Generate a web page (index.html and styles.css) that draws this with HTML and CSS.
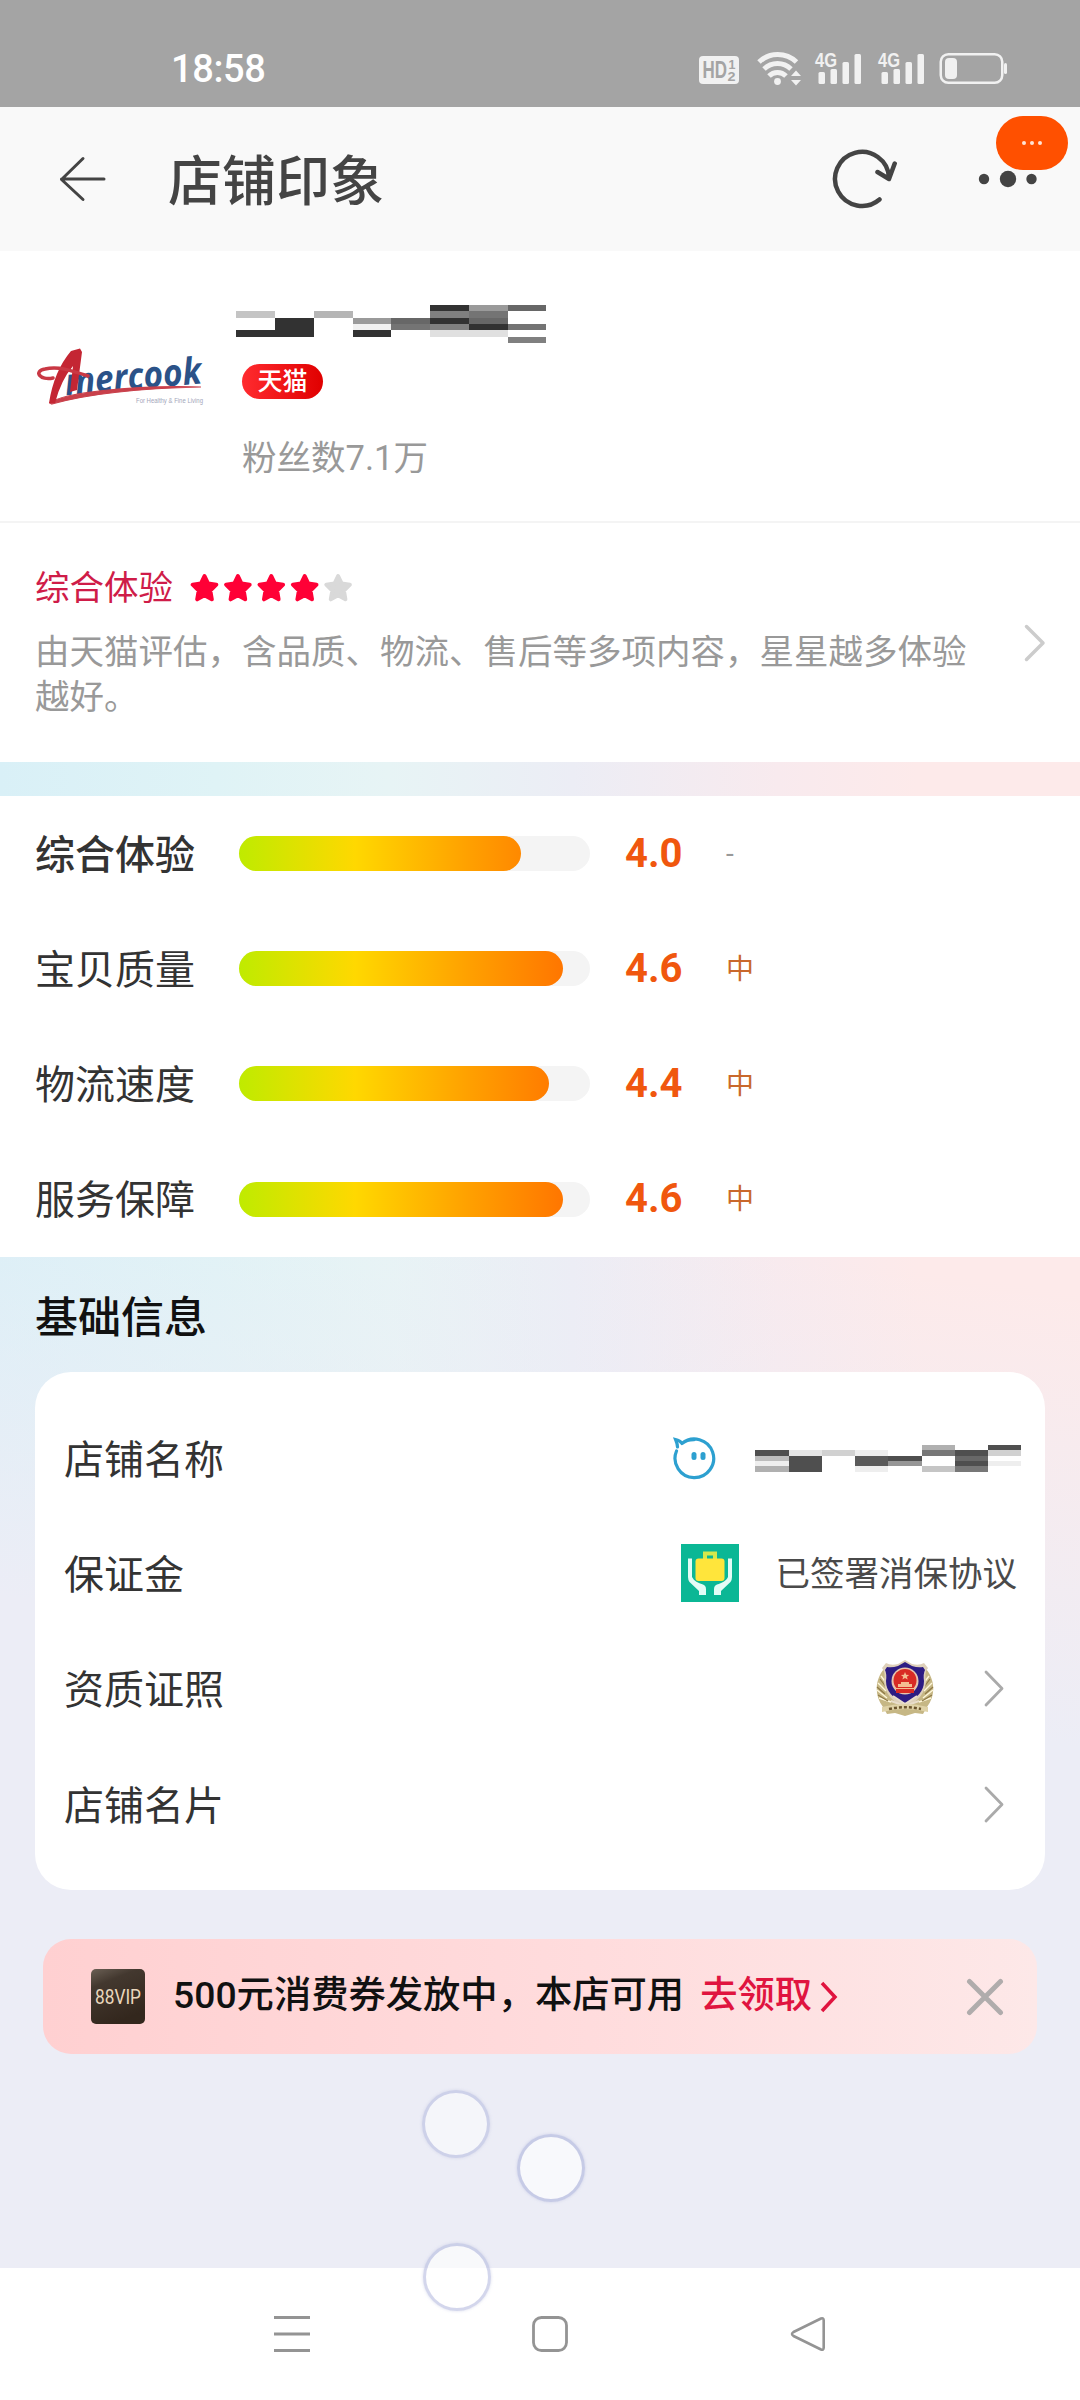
FILE: index.html
```html
<!DOCTYPE html>
<html lang="zh-CN">
<head>
<meta charset="utf-8">
<title>店铺印象</title>
<link rel="stylesheet" href="styles.css">
</head>
<body>
<div class="screen">
  <header class="status">
    <span class="time">18:58</span>
    <svg class="status-icons" width="312" height="48" viewBox="698 44 312 48">
      <g fill="#f1f1f1">
        <rect x="699" y="56" width="40" height="28" rx="4"/>
        <g fill="none" stroke="#f1f1f1" stroke-width="5">
          <path d="M759 62a27 27 0 0 1 37.500 0"/>
          <path d="M764 69a19.500 19.500 0 0 1 27 0"/>
          <path d="M769 76a12 12 0 0 1 17 0"/>
        </g>
        <circle cx="777.500" cy="81.500" r="3.400"/>
        <path d="M791 76l5-5.500 5 5.500zM791 80h10l-5 5.500z"/>
        <rect x="818.500" y="72" width="6.500" height="12" rx="1.500"/>
        <rect x="830.500" y="69" width="6.500" height="15" rx="1.500"/>
        <rect x="842.500" y="62" width="6.500" height="22" rx="1.500"/>
        <rect x="854.500" y="54" width="6.500" height="30" rx="1.500"/>
        <rect x="881.500" y="72" width="6.500" height="12" rx="1.500"/>
        <rect x="893.500" y="69" width="6.500" height="15" rx="1.500"/>
        <rect x="905.500" y="62" width="6.500" height="22" rx="1.500"/>
        <rect x="917.500" y="54" width="6.500" height="30" rx="1.500"/>
        <rect x="940.750" y="54.250" width="61.500" height="28.500" rx="7.500" fill="none" stroke="#f1f1f1" stroke-width="2.500"/>
        <rect x="945" y="58" width="12" height="21" rx="4"/>
        <rect x="1004" y="63" width="3" height="11" rx="1.500"/>
        <g class="net">
          <text x="815" y="67" textLength="22" lengthAdjust="spacingAndGlyphs">4G</text>
          <text x="878" y="67" textLength="22" lengthAdjust="spacingAndGlyphs">4G</text>
        </g>
      </g>
      <g class="hd">
        <text x="702.500" y="78" font-size="23" textLength="24.500" lengthAdjust="spacingAndGlyphs">HD</text>
        <text x="728.500" y="69" font-size="12.500">1</text>
        <text x="727.500" y="80.500" font-size="12.500" textLength="8" lengthAdjust="spacingAndGlyphs">2</text>
      </g>
    </svg>
  </header>

  <nav class="topbar">
    <svg class="back" width="48" height="46" viewBox="0 0 48 46"><path d="M45 23H2.500M24 2.500L2.500 23.500L24 43.500" fill="none" stroke="#444" stroke-width="3" stroke-linecap="round" stroke-linejoin="round"/></svg>
    <h1>店铺印象</h1>
    <svg class="refresh" width="68" height="64" viewBox="830 147 68 64"><path d="M879.500 199.500A27 27 0 1 1 889 177.500M877.500 172L889 179L894.700 163.500" fill="none" stroke="#444" stroke-width="4.500" stroke-linecap="round" stroke-linejoin="round"/></svg>
    <div class="more">
      <svg width="60" height="20" viewBox="0 0 60 20" fill="#444"><circle cx="6" cy="10" r="5.200"/><circle cx="30" cy="10" r="8.200"/><circle cx="53.500" cy="10" r="5.200"/></svg>
      <span class="bubble"><i></i><i></i><i></i></span>
    </div>
  </nav>

  <main class="content">
    <section class="shop">
      <svg class="logo" width="174" height="78" viewBox="34 337 174 78">
        <g transform="rotate(-5 68 396)"><text class="logo-word" x="66" y="395" textLength="137" lengthAdjust="spacingAndGlyphs">mercook</text></g>
        <path d="M50 403C62 393 130 385 201 387C150 388 92 393 52 404z" fill="#c9404b" stroke="#c9404b" stroke-width="1.200"/>
        <path d="M71 351L80 348.500L82 352L77 390L70 392L73 366Q61 380 55 403L49 403Q54 371 71 351z" fill="#c42633"/>
        <path d="M53 378C40 381 33 371 45 369C58 366 70 370 88 376" fill="none" stroke="#c93844" stroke-width="3.500" stroke-linecap="round"/>
        <text class="logo-tag" x="136" y="403" textLength="67" lengthAdjust="spacingAndGlyphs">For Healthy &amp; Fine Living</text>
      </svg>
      <div class="shop-info">
        <svg class="masked-name" width="310" height="38" viewBox="0 0 310 38" shape-rendering="crispEdges">
          <path fill="#c4c4c4" d="M0 6h39v7H0z"/><path fill="#323232" d="M0 25h39v7H0zM39 13h39v19H39zM117 25h38v7h-38zM194 0h39v6h-39zM194 13h39v6h-39zM233 19h39v6h-39z"/>
          <path fill="#b5b5b5" d="M78 6h39v7H78z"/><path fill="#9a9a9a" d="M117 13h38v6h-38zM233 0h39v6h-39z"/><path fill="#f0f0f0" d="M117 19h38v6h-38z"/>
          <path fill="#676767" d="M155 13h39v6h-39zM233 13h39v6h-39zM272 0h38v6h-38z"/><path fill="#747474" d="M155 19h39v6h-39zM272 19h38v6h-38zM233 6h39v7h-39z"/>
          <path fill="#808080" d="M194 6h39v7h-39zM194 19h39v6h-39zM272 32h38v6h-38z"/><path fill="#e0e0e0" d="M194 25h78v7h-78z"/>
        </svg>
        <span class="tmall">天猫</span>
        <span class="fans">粉丝数7.1万</span>
      </div>
    </section>

    <section class="overview">
      <div class="overview-text">
        <div class="rating">
          <span>综合体验</span>
          <svg width="165" height="30" viewBox="0 0 165 30">
            <defs><path id="star" d="M14.500 3l3.600 7.500 8.200 1.200-6 6 1.500 8.600-7.300-4-7.300 4 1.500-8.600-6-6 8.200-1.200z" stroke-width="4" stroke-linejoin="round"/></defs>
            <g fill="#ff0036" stroke="#ff0036"><use href="#star"/><use href="#star" x="33.400"/><use href="#star" x="66.800"/><use href="#star" x="100.200"/></g>
            <use href="#star" x="133.600" fill="#d9d9d9" stroke="#d9d9d9"/>
          </svg>
        </div>
        <p>由天猫评估，含品质、物流、售后等多项内容，星星越多体验越好。</p>
      </div>
      <svg class="chev-light" width="22" height="38" viewBox="0 0 22 38"><path d="M2.500 2.500L19 19L2.500 35.500" fill="none" stroke="#ccc" stroke-width="3.500" stroke-linecap="round" stroke-linejoin="round"/></svg>
    </section>

    <section class="scores">
      <div class="score lead"><span class="label">综合体验</span><div class="track"><div class="fill" style="width:80.400%"></div></div><b>4.0</b><em class="none">-</em></div>
      <div class="score"><span class="label">宝贝质量</span><div class="track"><div class="fill" style="width:92.400%"></div></div><b>4.6</b><em>中</em></div>
      <div class="score"><span class="label">物流速度</span><div class="track"><div class="fill" style="width:88.400%"></div></div><b>4.4</b><em>中</em></div>
      <div class="score"><span class="label">服务保障</span><div class="track"><div class="fill" style="width:92.400%"></div></div><b>4.6</b><em>中</em></div>
    </section>

    <section class="basics">
      <h2>基础信息</h2>
      <div class="card">
        <div class="row name-row">
          <span>店铺名称</span>
          <svg class="wangwang" width="44" height="46" viewBox="673 1435 44 46"><path d="M677.500 1450A19.300 19.300 0 1 0 683 1442.500C687 1439 692 1438.700 695 1438.700M683 1442.500C681.500 1440 679 1439 676.500 1438.500C677.500 1441 678.500 1443 678.500 1446M683 1442.500A19.300 19.300 0 0 1 695 1438.700" fill="none" stroke="#2da0d0" stroke-width="3.200" stroke-linecap="round"/><rect x="692.500" y="1451" width="5" height="8" rx="2.500" fill="#2da0d0"/><rect x="701.500" y="1451" width="5" height="8" rx="2.500" fill="#2da0d0"/></svg>
          <svg width="266" height="27" viewBox="0 0 266 27" shape-rendering="crispEdges">
            <path fill="#4f4f4f" d="M0 5h34v6H0zM34 11h33v16H34zM133 11h34v5h-34zM200 5h33v6h-33zM200 16h33v5h-33zM233 0h33v5h-33z"/>
            <path fill="#bcbcbc" d="M0 11h34v5H0z"/><path fill="#eeeeee" d="M0 16h34v5H0zM100 5h33v6h-33zM100 21h33v6h-33zM233 16h33v5h-33z"/><path fill="#b0b0b0" d="M0 21h34v6H0zM167 0h33v5h-33z"/>
            <path fill="#e5e5e5" d="M34 5h33v6H34z"/><path fill="#d1d1d1" d="M67 5h33v6H67zM233 5h33v6h-33z"/><path fill="#5a5a5a" d="M100 11h33v10h-33z"/><path fill="#969696" d="M133 16h34v5h-34z"/>
            <path fill="#777777" d="M167 5h33v6h-33zM200 21h33v6h-33z"/><path fill="#c5c5c5" d="M167 21h33v6h-33z"/><path fill="#686868" d="M200 11h33v5h-33z"/>
          </svg>
        </div>
        <div class="row deposit-row">
          <span>保证金</span>
          <svg class="deposit-icon" width="58" height="58" viewBox="0 0 58 58"><path fill="#0bb795" d="M0 0h58v58H0z"/><path d="M24 17V9.500h10V17" fill="none" stroke="#d5e84c" stroke-width="4"/><rect x="14.500" y="14.500" width="29" height="22.500" rx="3" fill="#ffe53b"/><path d="M7 14.500h4V33c2 4 6 6 11 7.500 2 1 3 2 3 5V51h-7v-4L8.500 38Q7 36 7 33zM51 14.500h-4V33c-2 4-6 6-11 7.500-2 1-3 2-3 5V51h7v-4l9.500-9Q51 36 51 33z" fill="#e3fcf6"/></svg>
          <span class="value">已签署消保协议</span>
        </div>
        <div class="row licence-row">
          <span>资质证照</span>
          <svg class="emblem" width="60" height="58" viewBox="0 0 60 58">
            <path d="M9 10C0 20-1 37 8 48l4 7 8-1 10 3 10-3 8 1 4-7C61 37 60 20 51 10z" fill="#c6b785"/>
            <path d="M6 17l6 8M3 24l8 8M2 31l10 8M4 39l12 4M54 17l-6 8M57 24l-8 8M58 31l-10 8M56 39l-12 4" stroke="#fff8dc" stroke-width="1.400"/>
            <path d="M5 20l6 8M2 28l8 7M3 36l10 6M55 20l-6 8M58 28l-8 7M57 36l-10 6" stroke="#8e7947" stroke-width="1.200"/>
            <path d="M30 1l7 4q7 2 12-1l4 5q-4 5-2 13-1 18-21 26Q10 40 9 22 11 14 7 9l4-5q5 3 12 1z" fill="#ded0ba"/>
            <path d="M30 3l7 4q6 2 11 1l2 3q-2 4-1 11 0 15-19 22-19-7-19-22 1-7-1-11l2-3q5 1 11-1z" fill="#2d1c83"/>
            <circle cx="30" cy="22" r="13.500" fill="#e8c5ad"/><circle cx="30" cy="21.500" r="11.500" fill="#d92b24"/>
            <path d="M30 13l1.200 2.700 3 .2-2.300 1.800.8 2.800-2.700-1.600-2.600 1.600.8-2.800-2.300-1.800 3-.2zM26 23h8v2h3v3H23v-3h3zM20 29h20v1.500H20z" fill="#f4bd91"/>
            <path d="M21 30h18v4H21z" fill="#d92b24"/><path d="M18 37l12 8 12-8M16 42l14 5 14-5" fill="none" stroke="#e8ddcb" stroke-width="2"/>
            <path d="M7 48q23-6 46 0v5q-23-6-46 0z" fill="#dfd2a7"/><path d="M14 50q16-3.500 32 0" fill="none" stroke="#6b552d" stroke-width="2.500" stroke-dasharray="3 2"/>
          </svg>
          <svg class="chev" width="20" height="37" viewBox="0 0 20 37"><path d="M2 2L18 18.500L2 35" fill="none" stroke="#aaa" stroke-width="2.800" stroke-linecap="round" stroke-linejoin="round"/></svg>
        </div>
        <div class="row card-row">
          <span>店铺名片</span>
          <svg class="chev" width="20" height="37" viewBox="0 0 20 37"><path d="M2 2L18 18.500L2 35" fill="none" stroke="#aaa" stroke-width="2.800" stroke-linecap="round" stroke-linejoin="round"/></svg>
        </div>
      </div>
    </section>

    <aside class="promo">
      <svg class="vip" width="54" height="55" viewBox="0 0 54 55">
        <defs><linearGradient id="vip-bg" x1="0" y1="0" x2=".4" y2="1"><stop offset="0" stop-color="#6b6055"/><stop offset=".3" stop-color="#43382f"/><stop offset="1" stop-color="#33271d"/></linearGradient></defs>
        <rect width="54" height="55" rx="5" fill="url(#vip-bg)"/>
        <text x="4" y="34.500" textLength="46" lengthAdjust="spacingAndGlyphs">88VIP</text>
      </svg>
      <span class="promo-text">500元消费券发放中，本店可用</span>
      <span class="promo-link">去领取</span>
      <svg class="promo-chev" width="18" height="32" viewBox="0 0 18 32"><path d="M2 2L15 16L2 30" fill="none" stroke="#e0143f" stroke-width="3.500"/></svg>
      <svg class="close" width="38" height="38" viewBox="0 0 38 38"><path d="M3.500 3.500l31 31M34.500 3.500l-31 31" stroke="#b0acac" stroke-width="5" stroke-linecap="round"/></svg>
    </aside>
  </main>

  <footer class="navbar">
    <svg width="36" height="36" viewBox="0 0 36 36"><path d="M0 1.500h36M0 18h36M0 34.500h36" stroke="#949494" stroke-width="3"/></svg>
    <svg width="36" height="36" viewBox="0 0 36 36"><rect x="1.500" y="1.500" width="33" height="33" rx="8" fill="none" stroke="#949494" stroke-width="2.800"/></svg>
    <svg width="36" height="36" viewBox="0 0 36 36"><path d="M31 2.500L3.500 16q-3 2 0 4L31 33.500q2.700 1 2.700-2V4.500q0-3-2.700-2z" fill="none" stroke="#949494" stroke-width="2.600" stroke-linejoin="round"/></svg>
  </footer>

  <i class="touch touch-a"></i>
  <i class="touch touch-b"></i>
  <i class="touch touch-c"></i>
</div>
</body>
</html>
```

FILE: styles.css
```css
* { box-sizing: border-box; }

body {
  margin: 0;
  font-family: Roboto, "Noto Sans CJK SC", sans-serif;
  color: #333;
}

svg { display: block; flex: none; }
h1, h2, p { margin: 0; }
span { white-space: nowrap; }

.screen {
  position: relative;
  display: flex;
  flex-direction: column;
  width: 1080px;
  height: 2400px;
  overflow: hidden;
}

.status {
  display: flex;
  justify-content: space-between;
  height: 107px;
  padding: 44px 70px 0 171px;
  background: #a4a4a4;
}
.time { margin-top: 6px; font-size: 38px; font-weight: 500; line-height: 38px; color: #fff; letter-spacing: -.4px; }
.net { font: bold 21px "Liberation Sans", sans-serif; }
.hd { font-family: "Liberation Sans", sans-serif; font-weight: bold; fill: #a4a4a4; }

.topbar {
  display: flex;
  align-items: center;
  height: 144px;
  padding: 0 42px 0 59px;
  background: #f9f9f9;
}
h1 { flex: 1; margin-left: 61px; padding-top: 7px; font-size: 54px; font-weight: 500; line-height: 70px; color: #444; }
.refresh { margin-right: 80px; }
.more { position: relative; }
.bubble {
  position: absolute;
  left: 18px;
  top: -53px;
  display: flex;
  align-items: center;
  justify-content: center;
  gap: 4px;
  width: 72px;
  height: 54px;
  border-radius: 27px;
  background: #ff5000;
}
.bubble i { width: 4px; height: 4px; border-radius: 50%; background: #ffe4d6; }

.content {
  height: 2017px;
  background:
    linear-gradient(188deg, rgba(236, 237, 246, 0) 48%, #ecedf6 69%),
    linear-gradient(90deg, #d9f0f7 0%, #dff3f6 20%, #e7f4f5 36%, #ecedf5 53%, #f8eaee 72%, #fdeaea 85%);
}

.shop {
  display: flex;
  height: 272px;
  padding-left: 34px;
  border-bottom: 2px solid #f4f4f4;
  background: #fff;
}
.logo { margin-top: 86px; }
.logo-word { font: italic bold 37px "Open Sans", sans-serif; fill: #2b5288; }
.logo-tag { font: 7px "Liberation Sans", sans-serif; fill: #a3a6ba; }
.shop-info { display: flex; flex-direction: column; align-items: flex-start; margin-left: 28px; padding-top: 54px; }
.tmall {
  width: 81px;
  height: 35px;
  margin: 21px 0 0 6px;
  border-radius: 18px;
  background: linear-gradient(90deg, #ff2b2f, #e00000);
  color: #fff;
  font-size: 25px;
  font-weight: 500;
  line-height: 36px;
  text-align: center;
}
.fans { margin: 36px 0 0 6px; font-size: 34.5px; line-height: 46px; color: #999; }

.overview {
  display: flex;
  align-items: center;
  justify-content: space-between;
  height: 239px;
  padding: 0 34px 0 35px;
  background: #fff;
}
.overview-text { width: 940px; }
.rating { display: flex; align-items: center; gap: 17px; height: 44px; font-size: 34.5px; line-height: 44px; color: #cf1c48; }
.overview p { margin-top: 20px; font-size: 34.5px; line-height: 45px; color: #999; }

.scores {
  height: 461px;
  margin-top: 34px;
  background: #fff;
}
.score { display: flex; align-items: center; height: 115.2px; padding-left: 35px; }
.label { width: 204px; padding-top: 4px; font-size: 40px; line-height: 50px; }
.lead .label { font-weight: 500; }
.track { width: 351px; height: 35px; border-radius: 17.5px; background: #f4f4f4; }
.fill {
  height: 100%;
  border-radius: 17.5px;
  background: linear-gradient(90deg, #bfeb00 0, #ffd800 116px, #ffa000 230px, #ff6a00 351px);
}
.score b { width: 101px; padding-left: 35px; box-sizing: content-box; font-size: 40px; font-weight: 700; line-height: 46px; color: #f0570e; }
.score em { padding-top: 2px; font-size: 28px; font-style: normal; line-height: 32px; color: #c9682c; }
.score em.none { padding-top: 0; color: #999; }

.basics { padding: 33px 35px 0; }
h2 { height: 82px; font-size: 43px; font-weight: 500; line-height: 56px; color: #111; }
.card { height: 518px; padding: 29px 0 0 29px; border-radius: 36px; background: #fff; }
.row { display: flex; align-items: center; height: 115.2px; font-size: 40px; line-height: 50px; }
.row > span:first-child { flex: 1; padding-top: 5px; }
.name-row { padding-right: 24px; }
.wangwang { margin-right: 39px; }
.deposit-row { padding-right: 28px; }
.deposit-icon { margin-bottom: 2px; }
.value { margin-left: 37px; padding-top: 1px; font-size: 34.5px; color: #4a4a4a; }
.licence-row, .card-row { padding-right: 41px; }
.emblem { margin: 0 49px 2px 0; }

.promo {
  display: flex;
  align-items: center;
  height: 115px;
  margin: 49px 43px 0;
  padding: 0 33px 0 48px;
  border-radius: 28px;
  background: linear-gradient(90deg, #ffd0d1, #ffdcdd 55%, #fde8e8);
  font-size: 37.3px;
  font-weight: 500;
  line-height: 50px;
}
.vip text { font: 20px Roboto, sans-serif; fill: #ead7bd; }
.promo-text { margin: 0 0 4px 28px; color: #111; }
.promo-link { margin: 0 0 4px 16px; color: #e0143f; }
.promo-chev { margin-left: 8px; }
.close { margin-left: auto; }

.navbar {
  display: flex;
  justify-content: space-between;
  height: 132px;
  padding: 48px 254px 0 274px;
  background: #fff;
}

/* Touch points float over whatever is underneath. */
.touch {
  position: absolute;
  width: 68px;
  height: 68px;
  border: 3px solid rgba(183, 188, 224, .7);
  border-radius: 50%;
  background: rgba(255, 255, 255, .65);
  background-clip: padding-box;
  box-shadow: 0 0 3px rgba(183, 188, 224, .6);
}
.touch-a { left: 422px; top: 2090px; opacity: .8; }
.touch-b { left: 517px; top: 2134px; }
.touch-c { left: 423px; top: 2243px; background-color: rgba(255, 255, 255, .8); opacity: .85; }
```
